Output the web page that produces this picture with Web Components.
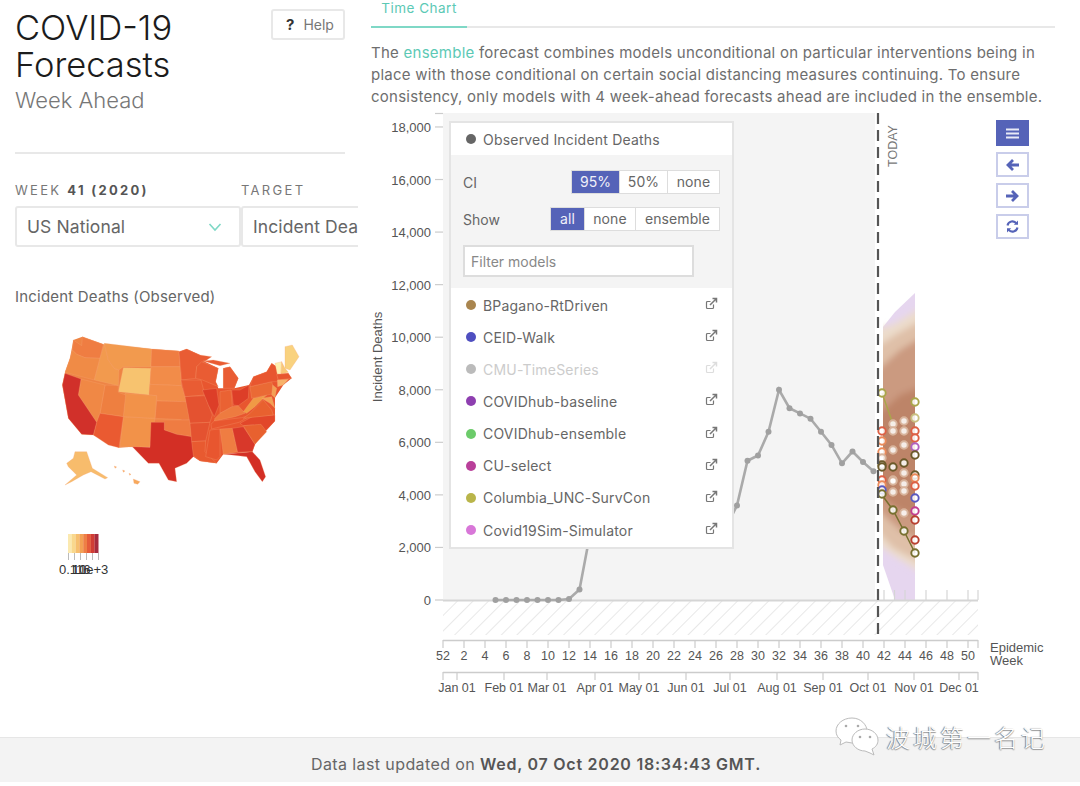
<!DOCTYPE html>
<html lang="en">
<head>
<meta charset="utf-8">
<title>COVID-19 Forecasts</title>
<style>
  html, body { margin: 0; padding: 0; background: white; }
  body { font-family: Inter, "Noto Sans", "Liberation Sans", sans-serif; color: #666; }
</style>
</head>
<body>
<app-shell>
  <side-panel slot="side">
    <title-block></title-block>
    <region-pickers></region-pickers>
    <us-map></us-map>
  </side-panel>
  <chart-column slot="main">
    <tab-strip></tab-strip>
    <intro-text>The <a>ensemble</a> forecast combines models unconditional on particular interventions being in place with those conditional on certain social distancing measures continuing. To ensure consistency, only models with 4 week-ahead forecasts ahead are included in the ensemble.</intro-text>
    <time-chart>
      <model-panel slot="over">
        <model-row slot="observed" color="#666" hide-link>Observed Incident Deaths</model-row>
        <model-row color="#a9854f">BPagano-RtDriven</model-row>
        <model-row color="#4f4fc0">CEID-Walk</model-row>
        <model-row color="#bbb" muted>CMU-TimeSeries</model-row>
        <model-row color="#8e3fb0">COVIDhub-baseline</model-row>
        <model-row color="#6ccb6a">COVIDhub-ensemble</model-row>
        <model-row color="#b93f9a">CU-select</model-row>
        <model-row color="#b9b54a">Columbia_UNC-SurvCon</model-row>
        <model-row color="#d877d8">Covid19Sim-Simulator</model-row>
      </model-panel>
      <chart-controls slot="over"></chart-controls>
    </time-chart>
  </chart-column>
  <page-footer slot="foot"></page-footer>
  <wechat-mark slot="foot"></wechat-mark>
</app-shell>

<script>
customElements.define("app-shell", class extends HTMLElement {
  constructor() {
    super();
    this.attachShadow({ mode: "open" }).innerHTML = `
      <style>
        :host { display: block; position: relative; width: 1080px; height: 786px; overflow: hidden; }
        .main { display: flex; height: 737px; }
      </style>
      <div class="main"><slot name="side"></slot><slot name="main"></slot></div>
      <slot name="foot"></slot>`;
  }
});

customElements.define("side-panel", class extends HTMLElement {
  constructor() {
    super();
    this.attachShadow({ mode: "open" }).innerHTML = `
      <style>
        :host { display: block; box-sizing: border-box; width: 358px; flex: none; padding-left: 15px; overflow: hidden; }
      </style>
      <slot></slot>`;
  }
});

customElements.define("title-block", class extends HTMLElement {
  constructor() {
    super();
    this.attachShadow({ mode: "open" }).innerHTML = `
      <style>
        :host { display: block; width: 330px; height: 154px; box-sizing: border-box; border-bottom: 2px solid #e8e8e8; }
        .top { display: flex; justify-content: space-between; align-items: flex-start; padding-top: 9px; }
        h1 { margin: 0; font-size: 34.500px; line-height: 37px; font-weight: 300; color: #1c1c1c; width: 200px; }
        h2 { margin: 2px 0 0; font-size: 22px; line-height: 30px; font-weight: 300; color: #777; }
        button { display: flex; align-items: center; gap: 9px; box-sizing: border-box; width: 74px; height: 31px; padding: 0 0 0 13px;
          border: 2px solid #e8e8e8; border-radius: 3px; background: white; font: 14px Inter, sans-serif; color: #777; }
        b { color: #333; font-size: 15px; }
      </style>
      <div class="top">
        <div><h1>COVID-19 Forecasts</h1><h2>Week Ahead</h2></div>
        <button><b>?</b>Help</button>
      </div>`;
  }
});

customElements.define("region-pickers", class extends HTMLElement {
  constructor() {
    super();
    this.attachShadow({ mode: "open" }).innerHTML = `
      <style>
        :host { display: flex; margin-top: 28px; width: 400px; }
        .col { flex: none; }
        label { display: block; height: 24px; font-size: 13px; line-height: 16px; letter-spacing: 2.300px; color: #777; }
        label b { color: #555; }
        .box { box-sizing: border-box; height: 41px; border: 2px solid #e8e8e8; border-radius: 3px; display: flex; align-items: center;
          justify-content: space-between; padding: 0 17px 0 10px; font-size: 17.500px; letter-spacing: .1px; color: #666; }
        .a { width: 226px; }
        .b { width: 160px; }
        .b .box { padding-right: 0; white-space: nowrap; }
      </style>
      <div class="col a"><label>WEEK <b>41 (2020)</b></label>
        <div class="box">US National
          <svg width="14" height="10" viewBox="0 0 14 10"><path d="M1.500 2 7 8l5.500-6" fill="none" stroke="#7fd8c6" stroke-width="1.600"/></svg>
        </div></div>
      <div class="col b"><label>TARGET</label><div class="box">Incident Deaths</div></div>`;
  }
});

customElements.define("us-map", class extends HTMLElement {
  constructor() {
    super();
    // rough state outlines, two groups on their own 3x grids
    const westBase = "55,15 82,5 145,28 290,42 372,48 410,305 232,335 192,338 115,300 80,298 40,250 22,150 30,112 45,70";
    const eastBase = "12,50 35,42 75,60 85,78 130,100 122,140 130,160 145,160 145,100 165,95 190,130 178,160 222,150 235,125 275,110 290,85 305,95 310,118 340,115 350,130 325,150 300,188 300,220 300,258 270,290 240,328 232,350 145,358 125,385 75,378 55,365 20,300 18,135";
    const west = [
      ["#ef7d42", "55,15 80,32 82,5 145,28 135,70 90,68 65,58 52,45"],
      ["#f08b46", "52,45 65,58 90,68 135,70 118,135 30,112 45,70"],
      ["#f29a4e", "135,70 148,25 160,75 178,100 192,105 190,152 118,135"],
      ["#f29a4e", "148,25 290,42 288,95 205,95 192,105 178,100 160,75"],
      ["#f7c36f", "205,98 288,100 282,180 190,170"],
      ["#ef7d42", "290,42 372,48 375,95 288,95"],
      ["#f28c49", "288,95 375,95 380,152 285,148"],
      ["#f28c49", "285,148 380,152 395,200 305,198 305,182 282,180"],
      ["#ee7b40", "305,198 395,200 405,255 300,250"],
      ["#ef7c42", "288,255 405,255 410,305 365,298 328,285 328,262 288,262"],
      ["#f29249", "205,245 300,250 285,337 195,335"],
      ["#f29249", "210,175 305,182 300,250 205,245"],
      ["#ee7f40", "150,150 190,152 190,172 212,180 205,245 135,235"],
      ["#f08845", "78,132 150,150 135,235 125,262 70,180"],
      ["#ea5a31", "135,235 205,245 192,338 160,330 115,300 125,262"],
      ["#d1302a", "30,115 78,132 70,180 125,262 115,300 80,298 40,250 22,150"],
      ["#d32f25", "288,262 328,262 328,285 365,298 410,305 418,362 395,385 360,400 365,440 340,435 312,385 280,385 232,335 285,337"],
      ["#f7bc6c", "60,350 95,350 112,400 158,428 150,432 108,410 85,420 50,440 30,450 65,420 40,395 35,385 55,370"],
      ["#f7a95c", "235,432 255,440 248,448 237,445"],
      ["#f7a95c", "178,393 185,396 180,400"],
      ["#f7a95c", "203,405 210,408 205,412"],
      ["#f7a95c", "222,415 228,418 224,421"]
    ];
    const east = [
      ["#e95c33", "12,50 35,42 75,60 110,65 65,95 62,130 20,135"],
      ["#e95c33", "18,135 78,135 90,180 30,185"],
      ["#e45230", "30,185 90,182 112,240 105,262 45,265"],
      ["#e45230", "45,265 105,262 92,318 50,320"],
      ["#e85a30", "50,320 92,318 90,350 125,385 75,378 55,362"],
      ["#e95c33", "65,95 80,80 130,100 122,140 130,155 82,135 62,130"],
      ["#e95c33", "85,78 115,75 165,85 135,92"],
      ["#dd3e28", "82,165 125,160 132,210 118,245 100,210"],
      ["#ea6233", "135,170 168,165 172,215 135,235"],
      ["#e95c33", "145,100 165,95 190,130 178,160 145,160"],
      ["#dd3e28", "170,165 195,165 222,150 220,190 190,212 175,210"],
      ["#ee7b40", "120,250 135,235 172,215 190,212 210,235 180,245 118,258"],
      ["#e8562f", "108,268 118,258 200,248 230,240 192,262 110,282"],
      ["#e2472a", "195,265 232,245 300,240 300,258 270,290 235,270 205,272"],
      ["#e8612f", "205,250 225,235 265,195 290,225 295,240"],
      ["#f09a45", "205,230 235,190 275,180 240,215 215,235"],
      ["#ea6a35", "225,155 290,140 300,175 230,190"],
      ["#e8562f", "235,125 275,110 290,85 305,95 310,140 290,140 225,155"],
      ["#f9d27f", "330,35 352,30 372,65 345,105 330,100"],
      ["#fdf0b0", "300,85 320,80 318,115 307,118"],
      ["#f8c877", "320,80 330,100 340,112 318,118"],
      ["#e8562f", "305,118 340,115 350,130 310,135"],
      ["#f7b26a", "307,135 340,133 325,150 308,155"],
      ["#f3a154", "293,150 305,160 300,188 290,180"],
      ["#f3a154", "260,190 290,185 300,220 285,205"],
      ["#e8562f", "105,285 135,282 135,365 125,375 92,365"],
      ["#ef7d42", "135,282 172,280 188,350 145,358"],
      ["#d8382a", "172,280 205,275 240,328 232,350 188,352"],
      ["#e8612f", "205,272 258,268 275,290 240,328"],
      ["#d32f25", "145,358 232,350 255,375 272,425 262,440 240,410 215,365 190,362 170,360"]
    ];
    const shapes = list => list.map(([c, p]) => `<polygon points="${p}" fill="${c}" stroke="#f6a878" stroke-width=".8"/>`).join("");
    let strip = "";
    ["#fbe9b0", "#f9d88d", "#f6bf6e", "#f3a154", "#ee7f45", "#e55c3a", "#d13d35", "#a62b3e"].forEach((c, i) => {
      strip += `<rect x="${38 + i * 3.8}" y="214" width="3.900" height="19" fill="${c}"/>`;
    });
    let ticks = "";
    for (let i = 0; i < 6; i++) {
      ticks += `<path d="M${38.5 + i * 6} 233v7" stroke="#bbb"/>`;
    }
    this.attachShadow({ mode: "open" }).innerHTML = `
      <style>
        :host { display: block; width: 330px; margin-top: 41px; }
        h3 { margin: 0; font-size: 15px; line-height: 18px; font-weight: 400; color: #666; letter-spacing: .2px; }
        svg { display: block; margin: 14px 0 0 15px; }
        text { font: 13px "Liberation Sans", sans-serif; fill: #333; }
      </style>
      <h3>Incident Deaths (Observed)</h3>
      <svg width="290" height="270" viewBox="0 0 290 270">
        <g transform="translate(25 15) scale(.3333)"><polygon points="${westBase}" fill="#ee8444"/></g>
        <g transform="translate(145 15) scale(.3333)"><polygon points="${eastBase}" fill="#e8562f"/></g>
        <g transform="translate(25 15) scale(.3333)">${shapes(west)}</g>
        <g transform="translate(145 15) scale(.3333)">${shapes(east)}</g>
        ${strip}${ticks}
        <text x="29" y="254">0.1</text><text x="42" y="254">1</text><text x="42" y="254">10</text><text x="46" y="254">16</text><text x="49" y="254">1e+3</text>
      </svg>`;
  }
});

customElements.define("chart-column", class extends HTMLElement {
  constructor() {
    super();
    this.attachShadow({ mode: "open" }).innerHTML = `
      <style>
        :host { display: block; box-sizing: border-box; width: 722px; flex: none; padding: 0 25px 0 13px; }
      </style>
      <slot></slot>`;
  }
});

customElements.define("tab-strip", class extends HTMLElement {
  constructor() {
    super();
    this.attachShadow({ mode: "open" }).innerHTML = `
      <style>
        :host { display: block; height: 28px; box-sizing: border-box; border-bottom: 2px solid #e8e8e8; }
        a { display: block; box-sizing: border-box; width: 96px; height: 28px; border-bottom: 2px solid #7fd8c6; text-align: center;
          font-size: 13.500px; letter-spacing: .5px; line-height: 17px; color: #5cc9b5; }
      </style>
      <a>Time Chart</a>`;
  }
});

customElements.define("intro-text", class extends HTMLElement {
  constructor() {
    super();
    this.attachShadow({ mode: "open" }).innerHTML = `
      <style>
        :host { display: block; height: 82px; padding-top: 14px; box-sizing: border-box; font-size: 15px; letter-spacing: .25px; line-height: 22px; color: #6e6e6e; }
        ::slotted(a) { color: #5cc9b5; }
      </style>
      <slot></slot>`;
  }
});

customElements.define("time-chart", class extends HTMLElement {
  constructor() {
    super();
    this.attachShadow({ mode: "open" }).innerHTML = `
      <style>
        :host { display: block; position: relative; width: 722px; height: 590px; margin-left: -13px; }
        svg { display: block; }
        text { font: 12.500px "Liberation Sans", sans-serif; fill: #555; }
        .big { font-size: 13px; }
      </style>
      <svg width="722" height="590" viewBox="358 110 722 590">${this.renderChart()}</svg>
      <slot name="over"></slot>`;
  }

  renderChart() {
    const wx = w => 464 + (w - 2) * 10.5;
    const vy = v => 600 - v * 0.02628;
    let out = `
      <defs>
        <pattern id="hatch" width="11" height="11" patternUnits="userSpaceOnUse" patternTransform="rotate(45)">
          <line x1="0" y1="0" x2="0" y2="11" stroke="#dedede" stroke-width="1.400"/>
        </pattern>
        <filter id="soft"><feGaussianBlur stdDeviation="3"/></filter>
        <clipPath id="fan"><rect x="883" y="290" width="32" height="310"/></clipPath>
      </defs>
      <rect x="443" y="113" width="432" height="487" fill="#f4f4f4"/>
      <rect x="443" y="600" width="535" height="35" fill="url(#hatch)"/>`;

    for (let v = 0; v <= 18000; v += 2000) {
      out += `<path d="M435 ${vy(v)}h8" stroke="#ccc" stroke-width="1.200"/>
        <text class="big" x="431" y="${vy(v) + 5}" text-anchor="end">${v.toLocaleString("en-US")}</text>`;
    }
    out += `<path d="M435 113.500h8" stroke="#ccc" stroke-width="1.200"/>
      <text class="big" transform="translate(382 357) rotate(-90)" text-anchor="middle">Incident Deaths</text>`;

    // forecast fan
    out += `
      <polygon points="883,327 895,312 915,293 915,600 895,600 883,565" fill="#e6d6ef"/>
      <g clip-path="url(#fan)"><g filter="url(#soft)">
        <polygon points="872,330 893,325 925,305 925,575 893,555 872,540" fill="#ecdccb"/>
        <polygon points="872,350 895,335 925,318 925,565 893,548 872,525" fill="#dfc0a8"/>
        <polygon points="872,375 900,350 925,335 925,545 900,530 872,505" fill="#cb9a80"/>
        <polygon points="872,420 900,395 925,385 925,520 900,510 872,490" fill="#bd8468"/>
      </g></g>`;

    // week grid ticks right of today
    [884, 894.5, 905, 926, 947, 968, 978].forEach(x => {
      out += `<path d="M${x} 590v10" stroke="#d5d5d5" stroke-width="1.200"/>`;
    });
    out += `<path d="M443 600.500h535" stroke="#d5d5d5" stroke-width="2"/>`;

    // observed line, the middle runs behind the panel
    const obs = [[5, 0], [6, 0], [7, 0], [8, 0], [9, 0], [10, 0], [11, 0], [12, 40], [13, 400], [14, 2500], [15, 5000],
      [20, 9000], [25, 4000], [27, 2800], [28, 3600], [29, 5300], [30, 5500], [31, 6400], [32, 8000], [33, 7300], [34, 7100],
      [35, 6900], [36, 6400], [37, 5900], [38, 5200], [39, 5650], [40, 5250], [41, 4900]];
    out += `<polyline points="${obs.map(([w, v]) => wx(w) + "," + vy(v)).join(" ")}" fill="none" stroke="#aaa" stroke-width="2.600"/>`;
    obs.forEach(([w, v]) => { out += `<circle cx="${wx(w)}" cy="${vy(v)}" r="3" fill="#a0a0a0"/>`; });

    // model forecasts
    out += `<polyline points="882,393 893,424" fill="none" stroke="#a9a64a" stroke-width="1.500"/>
      <polyline points="882,495 893,510 904,531 915,553" fill="none" stroke="#77702f" stroke-width="1.500"/>`;
    const red = "#dd6044", drk = "#6b5a2a", olv = "#a9a64a", pal = "#d8b49c", blu = "#5a5ac0", mag = "#c23f90", ora = "#ea8a5a";
    const dots = [
      [882, [[393, olv], [431, red], [441, ora], [452, ora], [458, pal], [465, drk], [467, drk], [480, red], [485, ora], [490, blu], [494, "#77702f"]]],
      [893, [[424, pal], [431, pal], [450, pal], [467, drk], [480, pal], [481, pal], [492, pal], [510, "#77702f"]]],
      [904, [[421, pal], [431, pal], [445, pal], [463, drk], [473, pal], [484, pal], [491, pal], [513, pal], [531, "#77702f"]]],
      [915, [[402, olv], [418, "#c9c080"], [431, red], [438, red], [447, "#b060c0"], [455, drk], [475, drk], [478, ora], [486, red], [498, blu], [511, mag], [520, "#b84030"], [540, "#b84030"], [553, "#77702f"]]]
    ];
    dots.forEach(([x, list]) => list.forEach(([y, c]) => {
      out += `<circle cx="${x}" cy="${y}" r="3.700" fill="#fff" fill-opacity=".85" stroke="${c}" stroke-width="1.900"/>`;
    }));

    // today line
    out += `<path d="M878 113V634" stroke="#555" stroke-width="2.200" stroke-dasharray="11 6"/>
      <text transform="translate(897 167) rotate(-90)" style="fill:#777">TODAY</text>`;

    // week axis
    out += `<path d="M443 640.500h535" stroke="#ccc" stroke-width="1.400"/>`;
    ["52", 2, 4, 6, 8, 10, 12, 14, 16, 18, 20, 22, 24, 26, 28, 30, 32, 34, 36, 38, 40, 42, 44, 46, 48, 50].forEach((w, i) => {
      const x = 443 + i * 21;
      out += `<path d="M${x} 640v8" stroke="#ccc" stroke-width="1.200"/>
        <text x="${x}" y="660" text-anchor="middle">${w}</text>`;
    });
    out += `<path d="M978 640v8" stroke="#ccc" stroke-width="1.200"/>
      <text class="big" x="990" y="652">Epidemic</text><text class="big" x="990" y="665">Week</text>`;

    // month axis
    out += `<path d="M443 672.500h535" stroke="#ccc" stroke-width="1.400"/><path d="M443 672v8M978 672v8" stroke="#ccc" stroke-width="1.200"/>`;
    [["Jan", 457], ["Feb", 504], ["Mar", 547], ["Apr", 595], ["May", 639], ["Jun", 686], ["Jul", 730], ["Aug", 777], ["Sep", 823], ["Oct", 868], ["Nov", 914], ["Dec", 959]].forEach(([m, x]) => {
      out += `<path d="M${x} 672v8" stroke="#ccc" stroke-width="1.200"/>
        <text x="${x}" y="692" text-anchor="middle">${m} 01</text>`;
    });
    return out;
  }
});

customElements.define("model-panel", class extends HTMLElement {
  constructor() {
    super();
    this.attachShadow({ mode: "open" }).innerHTML = `
      <style>
        :host { position: absolute; left: 91px; top: 11px; box-sizing: border-box; width: 285px; height: 428px; background: white;
          border: 2px solid #e4e4e4; display: block; font-size: 14px; }
        .head { height: 32px; }
        .tools { box-sizing: border-box; height: 133px; background: #f4f4f4; padding: 15px 12px 0 12px; margin-bottom: 1px; }
        .line { display: flex; justify-content: space-between; align-items: center; height: 24px; margin-bottom: 13px; color: #666; }
        input { display: block; box-sizing: border-box; width: 231px; height: 32px; margin-top: 14px; padding: 0 6px; border: 2px solid #ddd; background: white;
          font: 14px Inter, sans-serif; color: #888; outline: 0; }
        input::placeholder { color: #888; opacity: 1; }
        .seg { display: flex; background: #ddd; gap: 1px; border: 1px solid #ddd; font-size: 14px; letter-spacing: .1px; }
        .seg span { display: block; background: white; height: 22px; line-height: 22px; text-align: center; color: #666; }
        .seg .on { background: #5563b8; color: #f0f0f8; }
      </style>
      <div class="head"><slot name="observed"></slot></div>
      <div class="tools">
        <div class="line">CI
          <div class="seg"><span class="on" style="width:47px">95%</span><span style="width:47px">50%</span><span style="width:51px">none</span></div></div>
        <div class="line">Show
          <div class="seg"><span class="on" style="width:33px">all</span><span style="width:50px">none</span><span style="width:83px">ensemble</span></div></div>
        <input placeholder="Filter models">
      </div>
      <slot></slot>`;
  }
});

customElements.define("model-row", class extends HTMLElement {
  constructor() {
    super();
    this.attachShadow({ mode: "open" });
  }

  connectedCallback() {
    const muted = this.hasAttribute("muted");
    const color = this.getAttribute("color");
    const link = this.hasAttribute("hide-link") ? "" : `
      <svg width="13" height="13" viewBox="0 0 13 13" fill="none" stroke="currentColor" stroke-width="1.200">
        <path d="M8.500 7.500v3a1 1 0 0 1-1 1h-5a1 1 0 0 1-1-1v-5a1 1 0 0 1 1-1h3"/>
        <path d="M5 8 11 2M7.500 1.500h4v4" stroke-width="1.500"/>
      </svg>`;
    this.shadowRoot.innerHTML = `
      <style>
        :host { display: flex; align-items: center; height: 32.150px; padding: 0 14px 0 15px; color: ${muted ? "#ccc" : "#666"}; font-size: 14px; letter-spacing: .2px; }
        i { flex: none; width: 10px; height: 10px; border-radius: 50%; background: ${color}; margin-right: 7px; }
        .name { flex: 1; }
        svg { color: ${muted ? "#ddd" : "#777"}; margin-top: -3px; }
      </style>
      <i></i><span class="name"><slot></slot></span>${link}`;
  }
});

customElements.define("chart-controls", class extends HTMLElement {
  constructor() {
    super();
    this.attachShadow({ mode: "open" }).innerHTML = `
      <style>
        :host { position: absolute; left: 638px; top: 10px; display: flex; flex-direction: column; gap: 6px; }
        div { box-sizing: border-box; width: 33px; height: 25px; border: 2px solid #c9cdea; display: flex; align-items: center; justify-content: center; color: #5563b8; background: white; }
        .on { height: 26px; background: #5563b8; border-color: #5563b8; color: #e8eaf6; }
        svg { display: block; }
      </style>
      <div class="on"><svg width="13" height="11" viewBox="0 0 13 11"><path d="M0 1.500h13M0 5.500h13M0 9.500h13" stroke="currentColor" stroke-width="2"/></svg></div>
      <div><svg width="13" height="12" viewBox="0 0 13 12" fill="none" stroke="currentColor" stroke-width="2.800"><path d="M13 6H2M7 1 2 6l5 5"/></svg></div>
      <div><svg width="13" height="12" viewBox="0 0 13 12" fill="none" stroke="currentColor" stroke-width="2.800"><path d="M0 6h11M6 1l5 5-5 5"/></svg></div>
      <div><svg width="13" height="13" viewBox="0 0 13 13" fill="none" stroke="currentColor" stroke-width="2.100">
        <path d="M1.500 5.500A5 5 0 0 1 10.500 3.500"/><path d="M11.500 7.500A5 5 0 0 1 2.500 9.500"/>
        <path d="M12 .500v4.200H7.800z" fill="currentColor" stroke="none"/><path d="M1 12.500V8.300h4.200z" fill="currentColor" stroke="none"/>
      </svg></div>`;
  }
});

customElements.define("page-footer", class extends HTMLElement {
  constructor() {
    super();
    this.attachShadow({ mode: "open" }).innerHTML = `
      <style>
        :host { display: block; box-sizing: border-box; height: 45px; background: #f3f3f3; border-top: 1px solid #e6e6e6; padding-left: 311px;
          font-size: 16px; letter-spacing: .4px; line-height: 52px; color: #666; white-space: nowrap; }
        b { color: #555; font-weight: 600; letter-spacing: .75px; }
      </style>
      Data last updated on <b>Wed, 07 Oct 2020 18:34:43 GMT.</b>`;
  }
});

customElements.define("wechat-mark", class extends HTMLElement {
  constructor() {
    super();
    this.attachShadow({ mode: "open" }).innerHTML = `
      <style>
        :host { position: absolute; left: 834px; top: 716px; display: flex; align-items: center; gap: 6px; }
        span { font: 300 24px "Noto Sans CJK SC", sans-serif; color: #fff; text-shadow: -1px 0 1px #777, 0 1px 1px #999; white-space: nowrap; letter-spacing: 3px; }
      </style>
      <svg width="46" height="40" viewBox="0 0 46 40">
        <g fill="#fff" stroke="#bbb" stroke-width="1">
          <path d="M18 2C9 2 2 8 2 15c0 4 2 7 5 9l-1 5 6-3 6 1c9 0 15-6 15-12S27 2 18 2z"/>
          <path d="M31 13c-7 0-13 5-13 11s6 11 13 11l5 2 4 2-2-6c4-2 6-5 6-9 0-6-6-11-13-11z"/>
        </g>
        <circle cx="12" cy="10" r="1.300" fill="#aaa"/><circle cx="24" cy="10" r="1.300" fill="#aaa"/>
        <circle cx="26" cy="21" r="1.300" fill="#aaa"/><circle cx="36" cy="21" r="1.300" fill="#aaa"/>
      </svg>
      <span>波城第一名记</span>`;
  }
});
</script>
</body>
</html>
